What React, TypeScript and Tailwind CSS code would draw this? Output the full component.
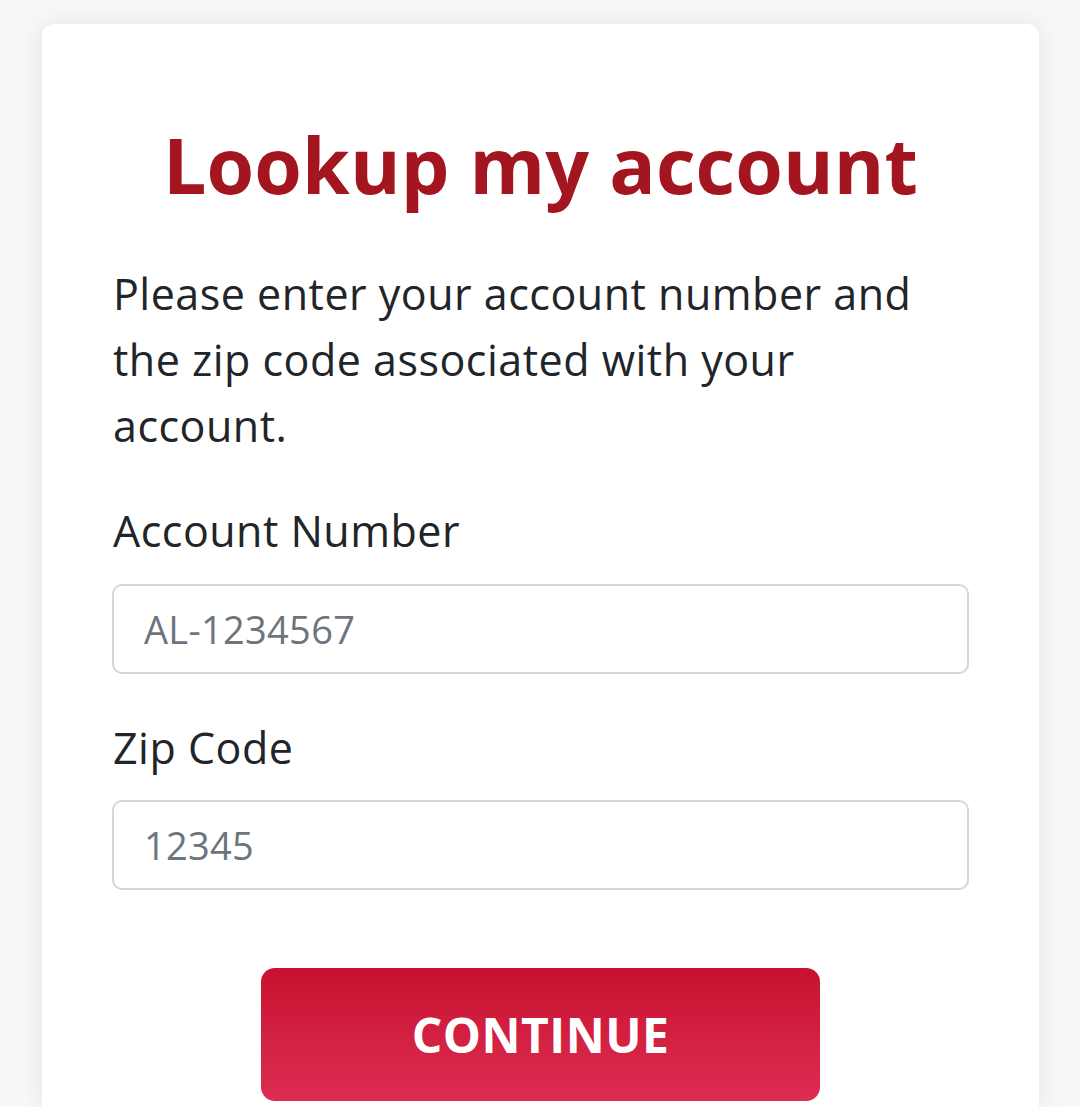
import React from "react";

export default function App() {
  return (
    <div className="h-[1107px] bg-[#f8f8f8] pt-[24px] px-[42px] overflow-hidden" style={{ fontFamily: '"Open Sans", sans-serif' }}>
      <div className="bg-white rounded-t-[12px] shadow-[0_0_28px_rgba(0,0,0,0.09)] w-[997px] h-[1083px] px-[71px] pt-[95px]">
        <h1 className="text-center text-[77px] leading-[92px] font-bold text-[#a3151f] tracking-[0.1px]">
          Lookup my account
        </h1>
        <p className="mt-[50px] text-[43px] leading-[66px] tracking-[0.5px] text-[#212529]">
          Please enter your account number and the zip code associated with your account.
        </p>
        <label className="block mt-[39px] text-[43px] leading-[66px] tracking-[0.5px] text-[#212529]">Account Number</label>
        <input
          className="mt-[20px] -ml-[1px] block w-[857px] h-[90px] rounded-[10px] border-2 border-[#d6d6d6] px-[30px] text-[38px] tracking-[0.3px] text-[#212529] placeholder:text-[#6c757d] outline-none"
          placeholder="AL-1234567"
          style={{ fontFamily: '"Open Sans", sans-serif' }}
        />
        <label className="block mt-[41px] text-[43px] leading-[66px] tracking-[0.5px] text-[#212529]">Zip Code</label>
        <input
          className="mt-[19px] -ml-[1px] block w-[857px] h-[90px] rounded-[10px] border-2 border-[#d6d6d6] px-[30px] text-[38px] tracking-[0.3px] text-[#212529] placeholder:text-[#6c757d] outline-none"
          placeholder="12345"
          style={{ fontFamily: '"Open Sans", sans-serif' }}
        />
        <div className="mt-[78px] flex justify-center">
          <button
            className="w-[559px] h-[133px] rounded-[14px] bg-gradient-to-b from-[#c8102f] to-[#dd2c52] text-white text-[48px] font-bold tracking-[0.5px]"
            style={{ fontFamily: '"Open Sans", sans-serif' }}
          >
            CONTINUE
          </button>
        </div>
      </div>
    </div>
  );
}
